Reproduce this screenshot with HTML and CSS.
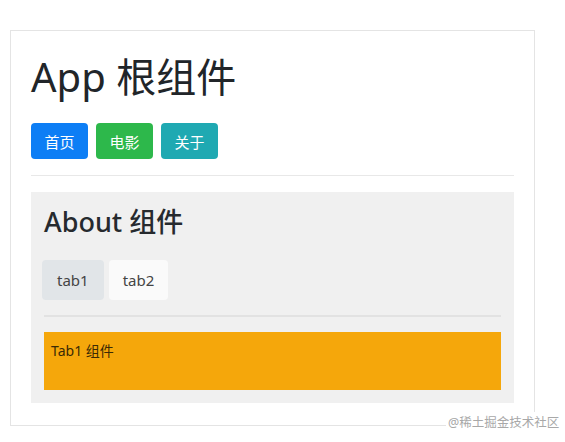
FILE: index.html
```html
<!DOCTYPE html>
<html lang="zh">
<head>
    <meta charset="UTF-8">
    <title>App 根组件</title>
    <link rel="stylesheet" href="styles.css">
</head>
<body>
    <div class="app">
        <h1>App 根组件</h1>
        <div class="nav">
            <button class="btn btn-blue">首页</button>
            <button class="btn btn-green">电影</button>
            <button class="btn btn-teal">关于</button>
        </div>
        <hr class="line">
        <div class="about">
            <h3>About 组件</h3>
            <div class="tabs">
                <button class="tab active">tab1</button>
                <button class="tab">tab2</button>
            </div>
            <hr class="line line-gray">
            <div class="tab-body">Tab1 组件</div>
        </div>
    </div>
    <div class="mark">@稀土掘金技术社区</div>
</body>
</html>
```

FILE: styles.css
```css
body { margin: 0; font-family: "Noto Sans", "Noto Sans CJK SC", sans-serif; color: #212529; background: #fff; }
.app { box-sizing: border-box; width: 525px; height: 396px; margin: 30px 0 0 10px; padding: 20px 20px 0 20px; border: 1px solid #e4e4e4; }
h1 { margin: 0; padding-top: 1px; font-size: 40px; font-weight: 400; line-height: 49px; }
.nav { display: flex; gap: 8px; margin-top: 22px; }
.btn { height: 36px; padding: 0 13.5px; border: none; border-radius: 4px; color: #fff; font-family: inherit; font-size: 15px; }
.btn-blue { background: #0d7ef5; }
.btn-green { background: #2db84b; }
.btn-teal { background: #1fa9b2; }
.line { margin: 16px 0; border: 0; border-top: 1px solid #e8e8e8; }
.about { background: #f0f0f0; padding: 12px 13px 13px 13px; }
h3 { margin: 0; font-size: 27px; font-weight: 500; line-height: 36px; color: #262a2e; }
.tabs { display: flex; gap: 5px; margin: 20px 0 0 -2px; }
.tab { height: 40px; padding: 0 14px; border: none; border-radius: 4px; background: #fafafa; color: #444; font-family: inherit; font-size: 15px; }
.tab.active { background: #e1e5e8; padding: 0 15px; }
.line-gray { margin: 15px 0; border-top: 2px solid #e2e2e2; }
.tab-body { height: 58px; box-sizing: border-box; padding: 8px 7px; background: #f5a70b; color: #3a2a05; font-size: 14px; }
.mark { position: absolute; top: 412px; left: 446px; white-space: nowrap; font-size: 12.5px; color: #a8a8a8; background: #fff; padding: 0 2px; }
```
